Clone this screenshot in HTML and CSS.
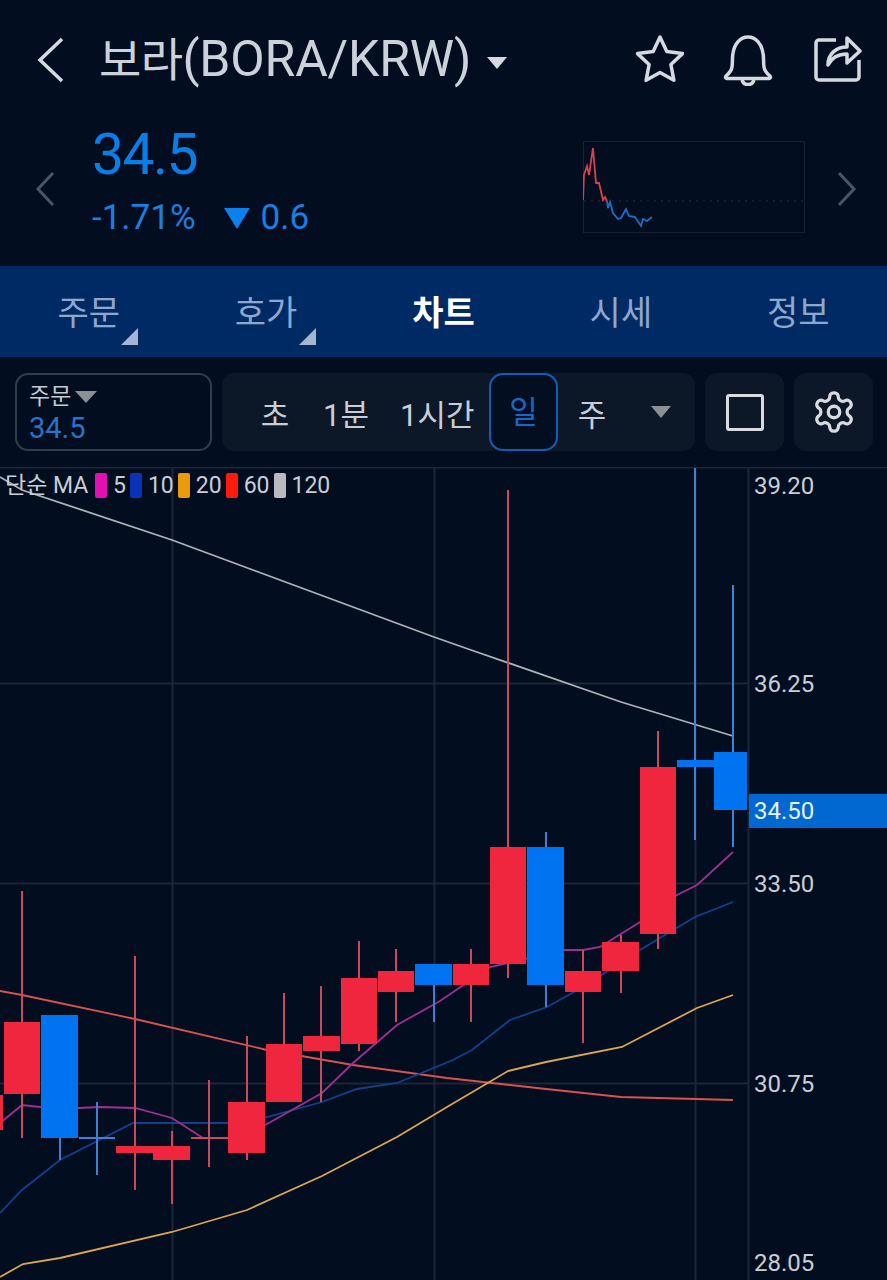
FILE: index.html
```html
<!DOCTYPE html>
<html lang="ko">

<head>
    <meta charset="UTF-8">
    <meta name="viewport" content="width=device-width, initial-scale=1.0">
    <title>BORA/KRW</title>
    <link rel="stylesheet" href="styles.css">
</head>

<body>
    <header class="top">
        <svg class="back" width="28" height="46" viewBox="0 0 28 46"><path d="M25 2 3 23l22 21" /></svg>
        <h1 class="title">보라<span class="title-code">(BORA/KRW)</span></h1>
        <span class="title-caret"></span>
        <div class="top-icons">
            <svg width="52" height="50" viewBox="0 0 52 50"><path d="M26 3l6.8 14.6 15.7 2-11.6 10.9 3 15.8L26 38.5l-13.9 7.8 3-15.8L3.500 19.600l15.700-2z" /></svg>
            <svg width="52" height="52" viewBox="0 0 52 52"><path d="M4 42c3-2.500 5.500-5 6-9 .8-5.500 0-9 1-14C12.500 10 18 3 26 3s13.500 7 15 16c1 5 .2 8.500 1 14 .5 4 3 6.500 6 9 1 1.200.2 2.500-1 2.500H5c-1.200 0-2-1.300-1-2.500zM20 45c.5 4 3 5.500 6 5.500s5.500-1.500 6-5.500" /></svg>
            <svg class="share" width="48" height="48" viewBox="0 0 48 48"><path d="M22 6H5a3 3 0 0 0-3 3v34a3 3 0 0 0 3 3h37a3 3 0 0 0 3-3V26" /><path d="M14 31c0-11 8-18 19-18V4l13 13-13 12v-9c-9 0-15 3-19 11z" /></svg>
        </div>
    </header>

    <section class="summary">
        <svg class="side" width="20" height="36" viewBox="0 0 20 36"><path d="M18 2 3 18l15 16" /></svg>
        <div class="price-box">
            <div class="price">34.5</div>
            <div class="change">
                <span>-1.71%</span>
                <span class="down-mark"></span>
                <span>0.6</span>
            </div>
        </div>
        <svg class="spark" width="223" height="93" viewBox="583 141 223 93">
            <rect class="spark-frame" x="583.500" y="141.500" width="221" height="91" />
            <line class="spark-base" x1="584" y1="201" x2="804" y2="201" />
            <polyline class="spark-up" points="583,200 584,175 587,166 589,175 593,148 596,183 599,183 603,200 605,197 607,201" />
            <polyline class="spark-down" points="607,201 608,208 610,202 613,213 618,219 621,218 626,209 629,216 635,217 641,226 643,219 647,221 652,217" />
        </svg>
        <svg class="side" width="20" height="36" viewBox="0 0 20 36"><path d="M2 2l15 16L2 34" /></svg>
    </section>

    <nav class="tabs">
        <a class="tab corner">주문</a>
        <a class="tab corner">호가</a>
        <a class="tab active">차트</a>
        <a class="tab">시세</a>
        <a class="tab">정보</a>
    </nav>

    <section class="tools">
        <div class="order">
            <div class="order-label">주문<span class="order-caret"></span></div>
            <div class="order-price">34.5</div>
        </div>
        <div class="period">
            <span class="p p-sec">초</span>
            <span class="p p-min">1분</span>
            <span class="p p-hour">1시간</span>
            <span class="p p-day">일</span>
            <span class="p p-week">주</span>
            <span class="period-caret"></span>
        </div>
        <button class="tool-btn"><span class="square"></span></button>
        <button class="tool-btn">
            <svg class="gear" width="46" height="46" viewBox="0 0 24 24">
                <path d="M12.220 2h-.44a2 2 0 0 0-2 2v.18a2 2 0 0 1-1 1.730l-.43.25a2 2 0 0 1-2 0l-.15-.08a2 2 0 0 0-2.730.73l-.22.38a2 2 0 0 0 .73 2.730l.15.1a2 2 0 0 1 1 1.720v.51a2 2 0 0 1-1 1.740l-.15.09a2 2 0 0 0-.73 2.730l.22.38a2 2 0 0 0 2.730.73l.15-.08a2 2 0 0 1 2 0l.43.25a2 2 0 0 1 1 1.730V20a2 2 0 0 0 2 2h.44a2 2 0 0 0 2-2v-.18a2 2 0 0 1 1-1.730l.43-.25a2 2 0 0 1 2 0l.15.08a2 2 0 0 0 2.730-.73l.22-.39a2 2 0 0 0-.73-2.730l-.15-.08a2 2 0 0 1-1-1.740v-.5a2 2 0 0 1 1-1.740l.15-.09a2 2 0 0 0 .73-2.730l-.22-.38a2 2 0 0 0-2.730-.73l-.15.08a2 2 0 0 1-2 0l-.43-.25a2 2 0 0 1-1-1.730V4a2 2 0 0 0-2-2z" />
                <circle cx="12" cy="12" r="3" />
            </svg>
        </button>
    </section>

    <section class="chart">
        <svg class="plot" width="887" height="813" viewBox="0 467 887 813">
            <!-- grid -->
            <path class="grid" d="M0 467.500H887M0 683.500H748M0 883.500H748M0 1083.500H748M172.500 467V1280M434.500 467V1280M695.500 467V1280M748.500 467V1280" />

            <!-- moving averages -->
            <polyline class="ma ma120" points="0,477 22,490 172,540 434,637 471,650 621,702 733,736" />
            <polyline class="ma ma60" points="0,991 22,995 135,1019 267,1050 353,1065 447,1078 546,1089 621,1097 733,1100" />
            <polyline class="ma ma20" points="0,1277 23,1264 60,1258 172,1232 247,1210 322,1176 397,1137 447,1107 508,1071 546,1062 622,1047 697,1008 733,995" />
            <polyline class="ma ma10" points="0,1213 22,1190 60,1160 133,1123 227,1123 267,1117 322,1102 357,1089 397,1083 453,1060 472,1050 510,1020 547,1007 583,987 640,950 695,917 733,902" />
            <polyline class="ma ma5" points="0,1123 22,1105 40,1107 78,1108 100,1107 135,1108 172,1118 203,1138 227,1138 267,1124 322,1093 353,1063 397,1025 440,1001 490,967 565,950 583,950 600,947 640,922 677,895 697,885 733,852" />

            <!-- wicks -->
            <g class="wick-up">
                <path d="M22 891V1138M135 956V1190M172 1131V1204M209 1080V1167M191 1138H228M247 1036V1160M284 993V1102M321 986V1102M359 941V1051M396 949V1022M471 949V1022M508 490V978M583 950V1043M621 935V993M658 731V949" />
            </g>
            <g class="wick-down">
                <path d="M60 1138V1160M97 1102V1175M79 1138H115M434 985V1022M546 832V1007M695 468V840M733 585V847" />
            </g>

            <!-- bodies -->
            <g class="up">
                <rect x="-30" y="1095" width="33" height="35" />
                <rect x="4" y="1022" width="36" height="72" />
                <rect x="116" y="1146" width="37" height="7" />
                <rect x="153" y="1146" width="37" height="14" />
                <rect x="228" y="1102" width="37" height="51" />
                <rect x="266" y="1044" width="36" height="58" />
                <rect x="303" y="1036" width="37" height="15" />
                <rect x="341" y="978" width="36" height="66" />
                <rect x="378" y="971" width="36" height="21" />
                <rect x="453" y="964" width="36" height="21" />
                <rect x="490" y="847" width="36" height="117" />
                <rect x="565" y="971" width="36" height="21" />
                <rect x="602" y="942" width="37" height="29" />
                <rect x="640" y="767" width="36" height="167" />
            </g>
            <g class="down">
                <rect x="41" y="1015" width="37" height="123" />
                <rect x="415" y="964" width="37" height="21" />
                <rect x="527" y="847" width="37" height="138" />
                <rect x="677" y="760" width="37" height="7" />
                <rect x="714" y="752" width="33" height="58" />
            </g>

            <!-- price axis -->
            <rect class="last-tag" x="749" y="794" width="138" height="34" />
            <g class="axis">
                <text x="754" y="494">39.20</text>
                <text x="754" y="692">36.25</text>
                <text x="754" y="892">33.50</text>
                <text x="754" y="1092">30.75</text>
                <text x="754" y="1271">28.05</text>
                <text class="last" x="754" y="819">34.50</text>
            </g>
        </svg>

        <div class="legend">
            <span class="legend-name">단순 MA</span>
            <i class="sw sw5"></i><span>5</span>
            <i class="sw sw10"></i><span>10</span>
            <i class="sw sw20"></i><span>20</span>
            <i class="sw sw60"></i><span>60</span>
            <i class="sw sw120"></i><span>120</span>
        </div>
    </section>
</body>

</html>
```

FILE: styles.css
```css
* {
    margin: 0;
    padding: 0;
    box-sizing: border-box;
}

body {
    width: 887px;
    height: 1280px;
    overflow: hidden;
    background-color: #020e1f;
    font-family: Roboto, "Noto Sans CJK KR", sans-serif;
    color: #d5dae1;
}

/* top bar */
.top {
    height: 120px;
    display: flex;
    align-items: flex-start;
    padding: 37px 25px 0 37px;
}

.back {
    fill: none;
    stroke: #d5dae1;
    stroke-width: 3.5;
}

.title {
    margin-left: 34px;
    margin-top: -5px;
    font-size: 46px;
    line-height: 54px;
    font-weight: 400;
    letter-spacing: -0.6px;
    color: #ccd2da;
    white-space: nowrap;
}

.title-code {
    font-size: 50px;
    letter-spacing: -0.2px;
}

.title-caret {
    margin-left: 16px;
    margin-top: 20px;
    border-left: 10px solid transparent;
    border-right: 10px solid transparent;
    border-top: 12px solid #d5dae1;
}

.top-icons {
    margin-left: auto;
    margin-top: -3px;
    display: flex;
    align-items: flex-start;
    gap: 36px;
}

.top-icons .share {
    margin-left: 4px;
}

.top-icons svg {
    fill: none;
    stroke: #d5dae1;
    stroke-width: 3.5;
    stroke-linejoin: round;
}

/* price summary */
.summary {
    height: 146px;
    position: relative;
    display: flex;
    align-items: flex-start;
    padding-left: 35px;
    padding-top: 51px;
}

.side {
    fill: none;
    stroke: #4b5563;
    stroke-width: 3;
}

.price-box {
    margin-left: 37px;
    margin-top: -46px;
    width: 491px;
}

.price {
    font-size: 57px;
    line-height: 60px;
    letter-spacing: -1.5px;
    color: #0b7de6;
}

.change {
    display: flex;
    align-items: center;
    margin-top: 13px;
    font-size: 35px;
    line-height: 40px;
    color: #1a7fe0;
}

.down-mark {
    margin-left: 28px;
    margin-right: 11px;
    border-left: 13px solid transparent;
    border-right: 13px solid transparent;
    border-top: 21px solid #0b80ee;
}

.spark {
    margin-top: -30px;
    margin-right: 31px;
}

.spark-frame {
    fill: none;
    stroke: #17212f;
}

.spark-base {
    stroke: #232e3b;
    stroke-dasharray: 2 5;
}

.spark-up,
.spark-down {
    fill: none;
    stroke-width: 1.8;
}

.spark-up {
    stroke: #d8404f;
}

.spark-down {
    stroke: #1f6dc8;
}

/* tabs */
.tabs {
    height: 91px;
    display: grid;
    grid-template-columns: repeat(5, 1fr);
    background-color: #002a63;
}

.tab {
    position: relative;
    display: flex;
    align-items: center;
    justify-content: center;
    padding-bottom: 2px;
    font-size: 34px;
    color: #8da7cf;
}

.tab.active {
    font-weight: 700;
    color: #ffffff;
}

.corner::after {
    content: "";
    position: absolute;
    right: 39px;
    bottom: 12px;
    border-left: 17px solid transparent;
    border-bottom: 17px solid #a3b5d2;
}

/* toolbar */
.tools {
    height: 110px;
    display: flex;
    align-items: flex-start;
    gap: 10px;
    padding: 16px 0 0 15px;
}

.order {
    width: 197px;
    height: 78px;
    padding: 8px 12px;
    border: 2px solid #323d4b;
    border-radius: 13px;
}

.order-label {
    display: flex;
    align-items: center;
    font-size: 23px;
    line-height: 28px;
    color: #c4cad2;
}

.order-caret {
    margin-left: 4px;
    border-left: 11px solid transparent;
    border-right: 11px solid transparent;
    border-top: 12px solid #8b9097;
}

.order-price {
    font-size: 29px;
    line-height: 34px;
    color: #2a72c8;
}

.period {
    width: 473px;
    height: 78px;
    display: flex;
    align-items: center;
    border-radius: 12px;
    background-color: #0c1828;
    font-size: 31px;
    color: #c9ced6;
}

.p {
    flex: none;
    text-align: center;
    white-space: nowrap;
}

.p-sec {
    width: 30px;
    margin-left: 38px;
}

.p-min {
    width: 46px;
    margin-left: 33px;
}

.p-hour {
    width: 74px;
    margin-left: 31px;
}

.p-day {
    width: 69px;
    height: 78px;
    margin-left: 15px;
    line-height: 76px;
    border: 2px solid #0f5fba;
    border-radius: 14px;
    background-color: #030f20;
    color: #1668c4;
}

.p-week {
    width: 30px;
    margin-left: 19px;
}

.period-caret {
    margin-left: 44px;
    border-left: 10px solid transparent;
    border-right: 10px solid transparent;
    border-top: 12px solid #8b9097;
}

.tool-btn {
    width: 79px;
    height: 78px;
    display: flex;
    align-items: center;
    justify-content: center;
    border: none;
    border-radius: 12px;
    background-color: #0c1828;
}

.square {
    width: 38px;
    height: 37px;
    border: 3px solid #d8dce1;
    border-radius: 3px;
}

.gear {
    fill: none;
    stroke: #d8dce1;
    stroke-width: 1.700;
}

/* chart */
.chart {
    position: relative;
    height: 813px;
}

.plot {
    display: block;
}

.grid {
    fill: none;
    stroke: #1b2736;
    stroke-width: 2;
}

.ma {
    fill: none;
    stroke-width: 1.800;
}

.ma120 {
    stroke: #aeb2b6;
}

.ma60 {
    stroke: #d9534c;
}

.ma20 {
    stroke: #dba64f;
}

.ma10 {
    stroke: #12408f;
}

.ma5 {
    stroke: #a12f90;
}

.wick-up path {
    fill: none;
    stroke: #c9495f;
    stroke-width: 2;
}

.wick-down path {
    fill: none;
    stroke: #3d80d4;
    stroke-width: 2;
}

.up {
    fill: #f0263f;
}

.down {
    fill: #0073f0;
}

.last-tag {
    fill: #0068d0;
}

.axis {
    font-size: 24px;
    fill: #c8ced6;
}

.axis .last {
    fill: #e8f1fb;
}

.legend {
    position: absolute;
    left: 5px;
    top: 6px;
    display: flex;
    align-items: center;
    font-size: 23px;
    line-height: 25px;
    color: #c8ced6;
}

.legend-name {
    width: 90px;
    white-space: nowrap;
}

.sw {
    width: 12px;
    height: 25px;
    margin-right: 6px;
    border-radius: 2px;
}

.legend span:not(.legend-name) {
    margin-right: 4px;
}

.sw5 {
    background-color: #e30fb4;
}

.sw10 {
    background-color: #0a33b8;
}

.sw20 {
    background-color: #ec9a0c;
}

.sw60 {
    background-color: #ff1a10;
}

.sw120 {
    background-color: #b8babd;
}
```
